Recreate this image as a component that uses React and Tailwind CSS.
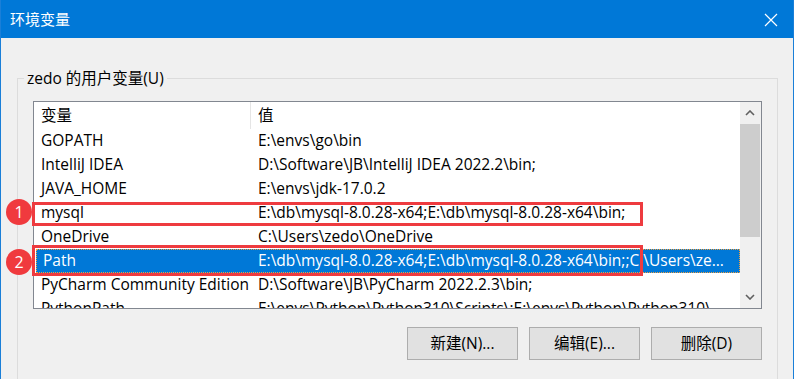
import React from "react";

const rows = [
  { name: "GOPATH", value: "E:\\envs\\go\\bin" },
  { name: "IntelliJ IDEA", value: "D:\\Software\\JB\\IntelliJ IDEA 2022.2\\bin;" },
  { name: "JAVA_HOME", value: "E:\\envs\\jdk-17.0.2" },
  { name: "mysql", value: "E:\\db\\mysql-8.0.28-x64;E:\\db\\mysql-8.0.28-x64\\bin;" },
  { name: "OneDrive", value: "C:\\Users\\zedo\\OneDrive" },
  {
    name: "Path",
    value: "E:\\db\\mysql-8.0.28-x64;E:\\db\\mysql-8.0.28-x64\\bin;;C:\\Users\\zedo\\AppData\\Local\\Microsoft\\WindowsApps;",
    selected: true,
  },
  { name: "PyCharm Community Edition", value: "D:\\Software\\JB\\PyCharm 2022.2.3\\bin;" },
  { name: "PythonPath", value: "E:\\envs\\Python\\Python310\\Scripts\\;E:\\envs\\Python\\Python310\\" },
];

const font = { fontFamily: '"Open Sans", "Noto Sans CJK SC", sans-serif' };

function Badge({ n, className }) {
  return (
    <div
      className={`absolute w-[26px] h-[26px] rounded-full bg-[#f03a3e] text-white text-[16px] flex items-center justify-center ${className}`}
    >
      {n}
    </div>
  );
}

export default function App() {
  return (
    <div
      className="relative w-[794px] h-[379px] overflow-hidden bg-[#f0f0f0] border-x border-[#1a7fd8] text-black"
      style={font}
    >
      {/* Title bar */}
      <div className="h-[38px] bg-[#0078d7] flex items-center justify-between pl-[9px] pr-[15px] text-white">
        <span className="text-[15px]">环境变量</span>
        <svg width="14" height="14" viewBox="0 0 14 14" className="mt-[1px]">
          <path d="M1 1 L13 13 M13 1 L1 13" stroke="white" strokeWidth="1.2" />
        </svg>
      </div>

      {/* Group box */}
      <div className="relative mt-[40px] ml-[16px] w-[761px] h-[320px] border border-[#dcdcdc] pt-[22px] pl-[15px]">
        <span className="absolute left-[6px] top-[-12px] bg-[#f0f0f0] px-[3px] text-[15.5px] leading-[22px]">
          zedo 的用户变量(U)
        </span>

        {/* List */}
        <div className="relative w-[729px] h-[208px] border border-[#828790] bg-white flex">
          <div className="flex-1 overflow-hidden">
            <div className="h-[27px] flex items-center text-[15.5px]">
              <div className="w-[217px] pl-[7px] border-r border-[#e5e5e5] h-full flex items-center">变量</div>
              <div className="pl-[7px]">值</div>
            </div>
            {rows.map((r) => (
              <div
                key={r.name}
                className={`h-[24px] flex items-center text-[15.5px] whitespace-nowrap ${
                  r.selected ? "bg-[#0078d7] text-white ml-[2px] outline outline-1 outline-dotted outline-[#f0a040] -outline-offset-1" : ""
                }`}
              >
                <div className={`${r.selected ? "w-[215px]" : "w-[217px]"} pl-[7px] shrink-0`}>{r.name}</div>
                <div className="pl-[7px] truncate pr-[8px]">{r.value}</div>
              </div>
            ))}
          </div>

          {/* Scrollbar */}
          <div className="w-[21px] shrink-0 bg-[#f0f0f0] flex flex-col pr-[1px]">
            <div className="h-[22px] flex items-center justify-center">
              <svg width="10" height="6" viewBox="0 0 10 6">
                <path d="M1 5 L5 1 L9 5" stroke="#606060" strokeWidth="1.6" fill="none" />
              </svg>
            </div>
            <div className="h-[113px] bg-[#cdcdcd]" />
            <div className="flex-1" />
            <div className="h-[22px] flex items-center justify-center">
              <svg width="10" height="6" viewBox="0 0 10 6">
                <path d="M1 1 L5 5 L9 1" stroke="#606060" strokeWidth="1.6" fill="none" />
              </svg>
            </div>
          </div>

          {/* Highlight boxes */}
          <div className="absolute left-[-2px] top-[100px] w-[611px] h-[24px] border-[3px] border-[#ee3b3f]" />
          <div className="absolute left-[-2px] top-[143px] w-[611px] h-[31px] border-[3px] border-[#ee3b3f]" />
        </div>

        {/* Buttons */}
        <div className="mt-[18px] w-[729px] flex justify-end gap-[11px]">
          {["新建(N)...", "编辑(E)...", "删除(D)"].map((b) => (
            <button
              key={b}
              className="w-[111px] h-[33px] bg-[#e1e1e1] border border-[#adadad] text-[15.5px] flex items-center justify-center"
            >
              {b}
            </button>
          ))}
        </div>
      </div>

      <Badge n="1" className="left-[5px] top-[199px]" />
      <Badge n="2" className="left-[5px] top-[249px]" />
    </div>
  );
}
